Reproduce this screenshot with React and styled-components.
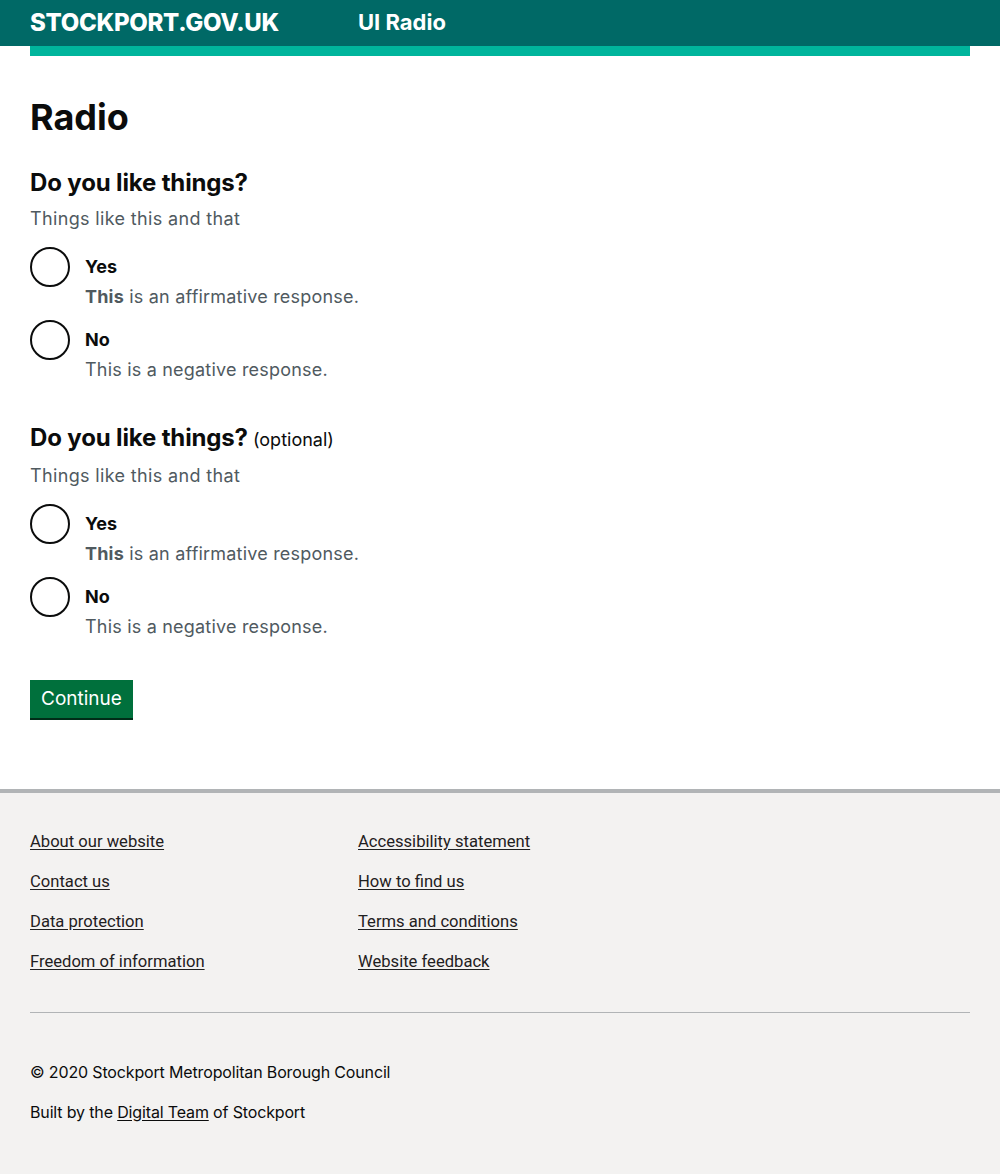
import React from 'react';
import styled, { createGlobalStyle } from 'styled-components';

const GlobalStyle = createGlobalStyle`
  html, body {
    margin: 0;
    padding: 0;
    background: #ffffff;
  }
  body {
    font-family: Inter, "Noto Sans", Arial, sans-serif;
    color: #0b0c0c;
  }
`;

const Header = styled.header`
  background: #006966;
`;

const HeaderInner = styled.div`
  height: 46px;
  padding: 0 30px;
  display: flex;
  align-items: center;
`;

const Logo = styled.a`
  color: #ffffff;
  font-weight: 800;
  font-size: 24px;
  letter-spacing: -0.3px;
  text-decoration: none;
  width: 328px;
  margin-top: -2px;
`;

const ServiceName = styled.span`
  color: #ffffff;
  font-weight: 700;
  font-size: 22px;
  margin-top: -2px;
`;

const Stripe = styled.div`
  height: 10px;
  margin: 0 30px;
  background: #00b59c;
`;

const Main = styled.main`
  padding: 39px 30px 71px;
`;

const Title = styled.h1`
  margin: 0 0 29px;
  font-size: 36px;
  line-height: 44px;
  font-weight: 700;
`;

const Fieldset = styled.fieldset`
  border: 0;
  margin: 0 0 30px;
  padding: 0;
`;

const Legend = styled.legend`
  padding: 0;
  font-size: 24px;
  line-height: 30px;
  font-weight: 700;
  letter-spacing: -0.15px;
  margin-bottom: 8px;
`;

const Optional = styled.span`
  font-size: 18px;
  font-weight: 400;
  letter-spacing: 0;
`;

const Hint = styled.div`
  color: #505a5f;
  font-size: 18px;
  line-height: 26px;
  letter-spacing: 0.35px;
  margin-bottom: 15px;
`;

const Item = styled.label`
  display: flex;
  gap: 15px;
  margin-bottom: 12px;
  cursor: pointer;
`;

const Circle = styled.input.attrs({ type: 'radio' })`
  appearance: none;
  margin: 0;
  flex: none;
  width: 40px;
  height: 40px;
  border: 2px solid #0b0c0c;
  border-radius: 50%;
  box-sizing: border-box;
  background: #ffffff;
`;

const ItemText = styled.div`
  padding-top: 9px;
`;

const ItemLabel = styled.div`
  font-size: 18px;
  line-height: 22px;
  font-weight: 700;
  margin-bottom: 8px;
`;

const ItemHint = styled.div`
  font-size: 18px;
  line-height: 22px;
  letter-spacing: 0.2px;
  color: #505a5f;

  b {
    font-weight: 700;
  }
`;

const Button = styled.button`
  font-family: inherit;
  background: #00703c;
  color: #ffffff;
  border: 0;
  box-shadow: 0 2px 0 #002d18;
  font-size: 19px;
  line-height: 24px;
  padding: 7px 11px;
  cursor: pointer;
`;

const Footer = styled.footer`
  background: #f3f2f1;
  border-top: 4px solid #b1b4b6;
  padding: 38px 30px 50px;
`;

const LinkGrid = styled.ul`
  list-style: none;
  margin: 0;
  padding: 0;
  display: grid;
  grid-template-columns: 328px 1fr;
  row-gap: 18px;
`;

const FooterLink = styled.a`
  font-family: Roboto, "Liberation Sans", sans-serif;
  font-size: 16.6px;
  line-height: 22px;
  color: #1f2021;
  text-decoration: underline;
  text-underline-offset: 2px;
`;

const Rule = styled.hr`
  border: 0;
  border-top: 1px solid #b1b4b6;
  margin: 39px 0 48px;
`;

const Meta = styled.p`
  margin: 0 0 18px;
  font-size: 16px;
  line-height: 22px;
  letter-spacing: -0.15px;
  color: #0b0c0c;

  a {
    color: #0b0c0c;
    text-underline-offset: 2px;
  }
`;

const options = [
  { label: 'Yes', hint: <><b>This</b> is an affirmative response.</> },
  { label: 'No', hint: 'This is a negative response.' },
];

const links = [
  'About our website',
  'Accessibility statement',
  'Contact us',
  'How to find us',
  'Data protection',
  'Terms and conditions',
  'Freedom of information',
  'Website feedback',
];

function Question({ name, optional }) {
  return (
    <Fieldset>
      <Legend>
        Do you like things?{optional && <Optional> (optional)</Optional>}
      </Legend>
      <Hint>Things like this and that</Hint>
      {options.map((o) => (
        <Item key={o.label}>
          <Circle name={name} value={o.label} />
          <ItemText>
            <ItemLabel>{o.label}</ItemLabel>
            <ItemHint>{o.hint}</ItemHint>
          </ItemText>
        </Item>
      ))}
    </Fieldset>
  );
}

export default function App() {
  return (
    <>
      <GlobalStyle />
      <Header>
        <HeaderInner>
          <Logo href="#">STOCKPORT.GOV.UK</Logo>
          <ServiceName>UI Radio</ServiceName>
        </HeaderInner>
      </Header>
      <Stripe />
      <Main>
        <Title>Radio</Title>
        <Question name="q1" />
        <Question name="q2" optional />
        <Button>Continue</Button>
      </Main>
      <Footer>
        <LinkGrid>
          {links.map((l) => (
            <li key={l}>
              <FooterLink href="#">{l}</FooterLink>
            </li>
          ))}
        </LinkGrid>
        <Rule />
        <Meta>© 2020 Stockport Metropolitan Borough Council</Meta>
        <Meta>
          Built by the <a href="#">Digital Team</a> of Stockport
        </Meta>
      </Footer>
    </>
  );
}
